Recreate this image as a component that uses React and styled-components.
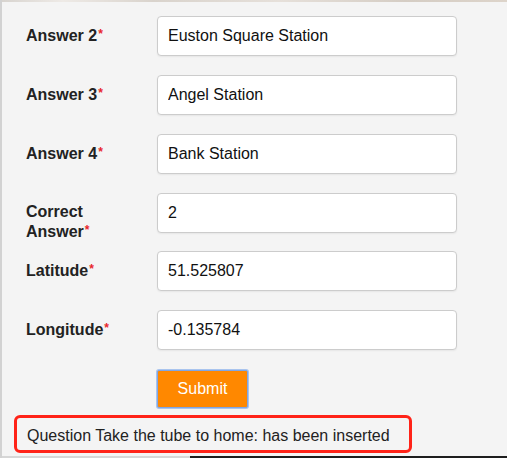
import React from "react";
import styled, { createGlobalStyle } from "styled-components";

const Global = createGlobalStyle`
  html, body { margin: 0; padding: 0; background: #f4f4f4; }
  body { font-family: "Liberation Sans", Arial, sans-serif; }
`;

const Page = styled.div`
  height: 458px;
  box-sizing: border-box;
  display: flex;
  flex-direction: column;
  border-left: 2px solid #d2d2d2;
  background: #f4f4f4;
`;

const TopStrip = styled.div`
  height: 2px;
  flex: none;
  background: linear-gradient(90deg, #d8d4cf 0%, #eeeae6 12%, #d9d3cc 30%, #e6e0da 55%, #d5cdc4 80%, #ddd4ca 100%);
`;

const Content = styled.form`
  flex: 1;
  display: flex;
  flex-direction: column;
  padding: 14px 0 0 24px;
  margin: 0;
`;

const Row = styled.div`
  display: grid;
  grid-template-columns: 131px 300px;
  grid-template-rows: 40px;
  flex: none;
  margin-bottom: ${(p) => p.$gap}px;
`;

const Label = styled.label`
  font-size: 16px;
  font-weight: bold;
  line-height: 19px;
  color: #222;
  padding: 9px 12px 0 0;
`;

const Req = styled.span`
  color: #e8262b;
  font-size: 12px;
  vertical-align: 3px;
  margin-left: 1px;
`;

const Input = styled.input`
  box-sizing: border-box;
  width: 300px;
  height: 40px;
  border: 1px solid #cccccc;
  border-radius: 4px;
  background: #fff;
  box-shadow: 0 1px 2px rgba(0, 0, 0, 0.06);
  padding: 0 10px;
  font-family: "Liberation Sans", Arial, sans-serif;
  font-size: 16px;
  color: #111;
  outline: none;
`;

const ButtonRow = styled.div`
  padding-left: 131px;
  margin-top: 1px;
`;

const Submit = styled.button`
  width: 91px;
  height: 38px;
  box-sizing: border-box;
  background: #ff8800;
  color: #fff;
  border: 1px solid #7fa6e6;
  box-shadow: 0 0 0 1px #a9c4ee;
  border-radius: 2px;
  font-family: "Liberation Sans", Arial, sans-serif;
  font-size: 16px;
  cursor: pointer;
  padding: 0;
`;

const Message = styled.div`
  margin: 7px 0 0 -12px;
  width: 398px;
  height: 38px;
  box-sizing: border-box;
  border: 3px solid #ff2318;
  border-radius: 6px;
  display: flex;
  align-items: center;
  padding: 4px 0 0 10px;
  font-size: 16px;
  color: #222;
`;

const BottomStrip = styled.div`
  height: 2px;
  flex: none;
  background: linear-gradient(90deg, #d6d6d6 0, #d6d6d6 188px, #1e1e1e 188px, #1e1e1e 100%);
`;

const fields = [
  { label: "Answer 2", value: "Euston Square Station", gap: 19 },
  { label: "Answer 3", value: "Angel Station", gap: 19 },
  { label: "Answer 4", value: "Bank Station", gap: 19 },
  { label: "Correct Answer", value: "2", gap: 18 },
  { label: "Latitude", value: "51.525807", gap: 19 },
  { label: "Longitude", value: "-0.135784", gap: 19 },
];

export default function App() {
  return (
    <>
      <Global />
      <Page>
        <TopStrip />
        <Content onSubmit={(e) => e.preventDefault()}>
          {fields.map((f) => (
            <Row key={f.label} $gap={f.gap}>
              <Label>
                {f.label}
                <Req>*</Req>
              </Label>
              <Input defaultValue={f.value} />
            </Row>
          ))}
          <ButtonRow>
            <Submit type="submit">Submit</Submit>
          </ButtonRow>
          <Message>Question Take the tube to home: has been inserted</Message>
        </Content>
        <BottomStrip />
      </Page>
    </>
  );
}
